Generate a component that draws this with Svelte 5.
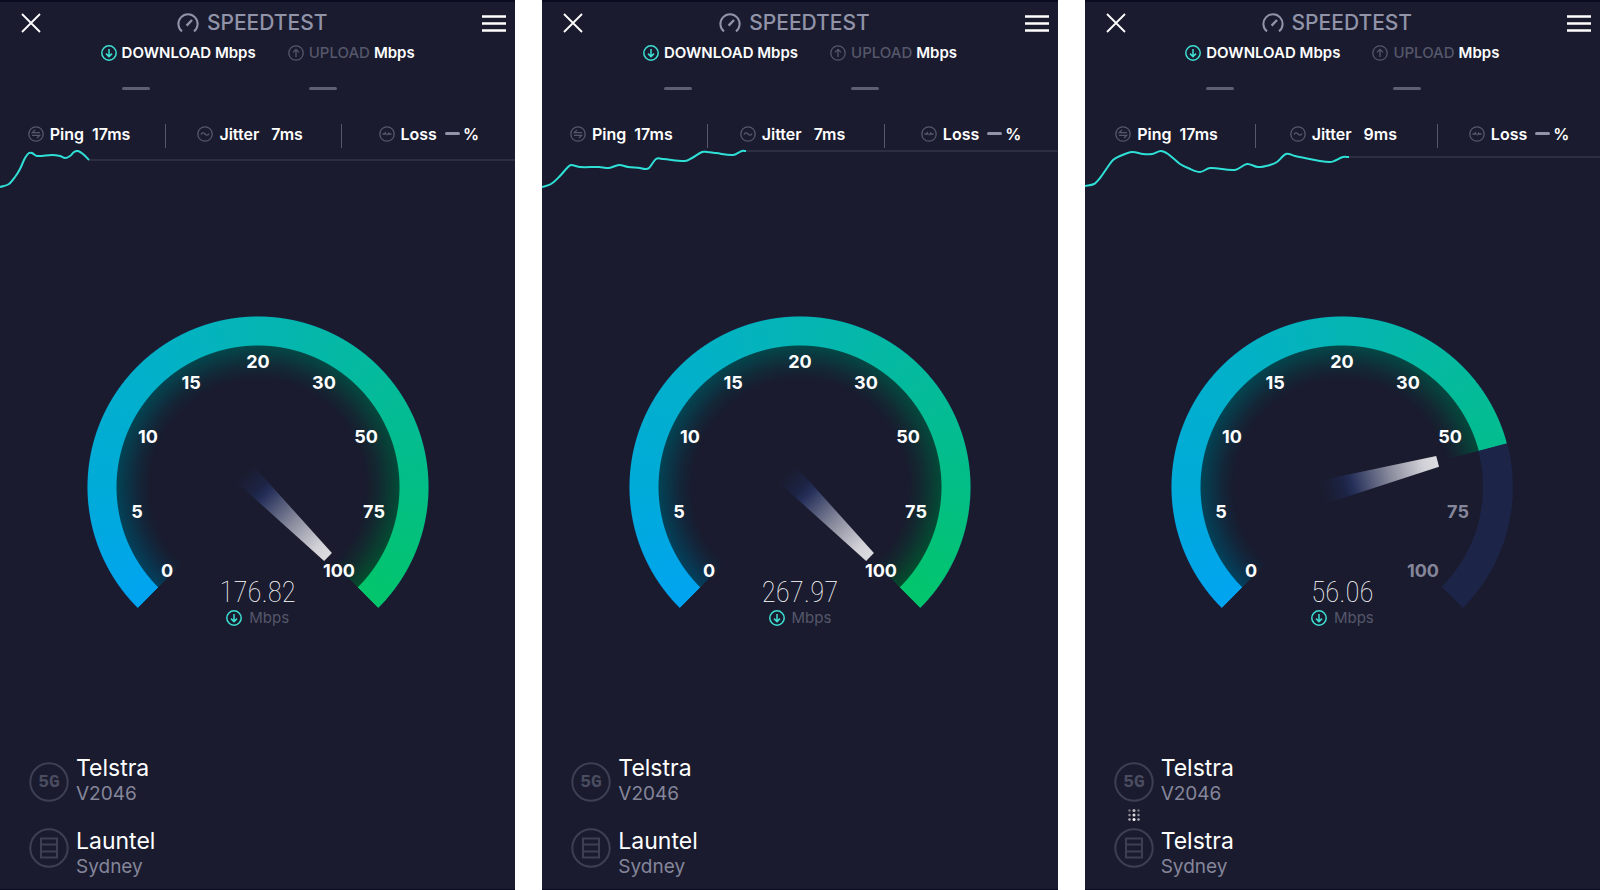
<script>
  const ticks = [
    { value: 0, x: -91, y: 83 },
    { value: 5, x: -121, y: 24 },
    { value: 10, x: -110, y: -51 },
    { value: 15, x: -67, y: -105 },
    { value: 20, x: 0, y: -126 },
    { value: 30, x: 66, y: -105 },
    { value: 50, x: 108, y: -51 },
    { value: 75, x: 116, y: 24 },
    { value: 100, x: 81, y: 83 },
  ]

  // sweep is in degrees, 0 at the bottom left and 270 at the bottom right
  const tests = [
    {
      speed: '176.82',
      sweep: 270,
      jitter: '7ms',
      server: 'Launtel',
      points: [[0,39],[9,36],[15,29],[20,21],[25,10],[29,5],[32,5],[37,8],[52,7],[60,8],[65,10],[70,8],[74,4],[78,3],[83,6],[89,12]],
    },
    {
      speed: '267.97',
      sweep: 270,
      jitter: '7ms',
      server: 'Launtel',
      points: [[0,39],[9,36],[17,29],[26,19],[29,17],[38,19],[57,19],[67,20],[77,17],[86,19],[98,20],[103,21],[107,20],[114,11],[121,11],[143,13],[150,10],[160,4],[165,4],[174,5],[191,7],[200,3],[204,3]],
    },
    {
      speed: '56.06',
      sweep: 210,
      jitter: '9ms',
      server: 'Telstra',
      wide: true,
      hopping: true,
      points: [[0,38],[9,36],[15,30],[22,20],[28,12],[35,8],[47,4],[58,6],[67,6],[76,3],[83,6],[95,16],[103,20],[115,24],[125,20],[150,22],[162,16],[173,19],[185,17],[192,14],[201,6],[210,8],[245,14],[258,9],[264,9]],
    },
  ]

  function isReached(value, sweep) {
    return sweep >= 270 || value <= 50
  }

  // cubic segments through every point
  function smooth(points) {
    let d = `M${points[0]}`
    for (let i = 0; i < points.length - 1; i++) {
      const p0 = points[i - 1] || points[i]
      const p1 = points[i]
      const p2 = points[i + 1]
      const p3 = points[i + 2] || p2
      const dx = p2[0] - p1[0]
      const s1 = (p2[1] - p0[1]) / (p2[0] - p0[0])
      const s2 = (p3[1] - p1[1]) / (p3[0] - p1[0])
      d += ` C${p1[0] + dx / 3},${p1[1] + s1 * dx / 3} ${p2[0] - dx / 3},${p2[1] - s2 * dx / 3} ${p2}`
    }
    return d
  }
</script>

{#snippet arrow(up)}
  <svg class="icon" class:up viewBox="0 0 16 16" aria-hidden="true">
    <circle cx="8" cy="8" r="7.2" />
    <path d="M8 4v7.4M5 8.6l3 3 3-3" />
  </svg>
{/snippet}

<main>
  {#each tests as test, i}
    <section class="panel">
      <header>
        <button aria-label="Close">
          <svg width="20" height="20" viewBox="0 0 20 20"><path d="M1 1l18 18M19 1L1 19" stroke="#fff" stroke-width="1.8" /></svg>
        </button>
        <h1>
          <svg width="22" height="20" viewBox="0 0 22 20" fill="none" stroke="#9193a8" stroke-width="2">
            <path d="M5 18.4A9.6 9.6 0 1 1 17 18.4" />
            <path d="M9.6 12.6L15 7" stroke-width="2.4" />
          </svg>
          SPEEDTEST
        </h1>
        <button aria-label="Menu">
          <svg width="24" height="17" viewBox="0 0 24 17"><path d="M0 1.5h24M0 8.5h24M0 15.5h24" stroke="#fff" stroke-width="2.6" /></svg>
        </button>
      </header>

      <div class="results">
        <div class="result download">
          <p>{@render arrow(false)}<span>DOWNLOAD <b>Mbps</b></span></p>
          <i class="blank"></i>
        </div>
        <div class="result upload">
          <p>{@render arrow(true)}<span>UPLOAD <b>Mbps</b></span></p>
          <i class="blank"></i>
        </div>
      </div>

      <div class="stats" class:wide={test.wide}>
        <div class="stat">
          <svg class="icon" viewBox="0 0 16 16" aria-hidden="true">
            <circle cx="8" cy="8" r="7.2" />
            <path d="M12 6.6H4.4L7 4M4 9.4h7.6L9 12" />
          </svg>
          <span>Ping</span>
          <span class="value">17ms</span>
        </div>
        <div class="stat">
          <svg class="icon" viewBox="0 0 16 16" aria-hidden="true">
            <circle cx="8" cy="8" r="7.2" />
            <path d="M4 8.6C5 6.4 6.6 6.4 8 8s3 1.6 4-.6" />
          </svg>
          <span>Jitter</span>
          <span class="value far">{test.jitter}</span>
        </div>
        <div class="stat last">
          <svg class="icon" viewBox="0 0 16 16" aria-hidden="true">
            <circle cx="8" cy="8" r="7.2" />
            <path d="M3.4 8h2l1-1.2L7.4 9M8.6 9.2l1-2.2.8 1h2.2" />
          </svg>
          <span>Loss</span>
          <span class="value loss"><i></i>%</span>
        </div>
      </div>

      <svg class="graph" aria-hidden="true">
        <line x1={test.points.at(-1)[0]} x2="100%" y1={test.points.at(-1)[1]} y2={test.points.at(-1)[1]} />
        <path d={smooth(test.points)} />
      </svg>

      <div class="gauge">
        <svg width="342" height="292" viewBox="-171 -171 342 292">
          <path class="track" d="M-110.3 110.3A156 156 0 1 1 110.3 110.3" />
        </svg>
        <div class="arc" style="--sweep: {test.sweep}deg"></div>
        <svg class="dial" width="342" height="292" viewBox="-171 -171 342 292">
          <defs>
            <linearGradient id="needle{i}" gradientUnits="userSpaceOnUse" x1="-22" x2="99" y1="0" y2="0">
              <stop offset="0" stop-color="#1c2547" stop-opacity="0" />
              <stop offset="0.2" stop-color="#1e2a55" stop-opacity="0.6" />
              <stop offset="0.28" stop-color="#27315a" />
              <stop offset="0.6" stop-color="#8b8d9f" />
              <stop offset="0.88" stop-color="#d2d1d7" />
              <stop offset="1" stop-color="#dddce0" />
            </linearGradient>
          </defs>
          <path d="M-22 -12L99 -5.5V5.5L-22 12Z" fill="url(#needle{i})" transform="rotate({test.sweep + 135})" />
          {#each ticks as tick}
            <text x={tick.x} y={tick.y} class:dim={!isReached(tick.value, test.sweep)}>{tick.value}</text>
          {/each}
        </svg>
        <div class="readout">
          <strong>{test.speed}</strong>
          <p class="unit">{@render arrow(false)}Mbps</p>
        </div>
      </div>

      <footer>
        <div class="hops">
          <svg width="40" height="40" viewBox="0 0 40 40" aria-hidden="true">
            <circle cx="20" cy="20" r="18.7" />
            <text x="20" y="20">5G</text>
          </svg>
          <div class="between">
            {#if test.hopping}
              <svg width="12" height="12" viewBox="0 0 12 12" aria-hidden="true">
                {#each [1.5, 6, 10.5] as y, row}
                  {#each [1.5, 6, 10.5] as x, col}
                    <circle class="dot" cx={x} cy={y} r={col === 1 ? 1.5 : 1.2} opacity={(col === 1 ? 0.7 : 0.4) + row * 0.14} />
                  {/each}
                {/each}
              </svg>
            {/if}
          </div>
          <svg width="40" height="40" viewBox="0 0 40 40" aria-hidden="true">
            <circle cx="20" cy="20" r="18.7" />
            <path d="M12 10.5h16v19H12zM12 16.5h16M12 23.5h16" />
          </svg>
        </div>
        <div class="names">
          <div>
            <h2>Telstra</h2>
            <p>V2046</p>
          </div>
          <div>
            <h2>{test.server}</h2>
            <p>Sydney</p>
          </div>
        </div>
      </footer>
    </section>
  {/each}
</main>

<style>
  :global(body) {
    margin: 0;
    background: #fff;
  }

  main {
    display: grid;
    grid-template-columns: repeat(3, 1fr);
    gap: 27px;
    min-height: 100vh;
    font-family: Inter, "Open Sans", sans-serif;
    color: #fff;
  }

  .panel {
    display: flex;
    flex-direction: column;
    background: #1a1b2e;
    border-top: 2px solid #0a0a20;
    border-bottom: 1px solid #0a0a20;
    overflow: hidden;
  }

  h1, h2, p {
    margin: 0;
    font-weight: 400;
  }

  header {
    display: flex;
    align-items: center;
    justify-content: space-between;
    height: 42px;
    padding: 0 9px 0 21px;
  }

  header button {
    display: flex;
    padding: 0;
    border: 0;
    background: none;
    cursor: pointer;
  }

  h1 {
    display: flex;
    align-items: center;
    gap: 8px;
    padding-right: 19px;
    font-size: 21px;
    line-height: 24px;
    font-weight: 500;
    color: #9193a8;
  }

  .icon {
    flex: none;
    width: 16px;
    height: 16px;
    fill: none;
    stroke: #55576b;
    stroke-width: 1.3;
  }

  .up path {
    transform: rotate(180deg);
    transform-origin: center;
  }

  .results {
    display: flex;
    justify-content: center;
    gap: 32px;
  }

  .result p {
    display: flex;
    align-items: center;
    gap: 5px;
    font-size: 15px;
    line-height: 18px;
    font-weight: 600;
  }

  .result b {
    font-weight: 600;
    color: #fff;
  }

  .download .icon, .unit .icon {
    stroke: #3de0d3;
    stroke-width: 1.5;
  }

  .upload p {
    font-weight: 500;
    color: #55576b;
  }

  .blank {
    display: block;
    width: 28px;
    height: 3px;
    margin: 25px 0 34px 21px;
    border-radius: 2px;
    background: #5d5f73;
  }

  .stats {
    display: grid;
    grid-template-columns: 165fr 176fr 174fr;
  }

  .stats.wide {
    grid-template-columns: 171fr 182fr 163fr;
  }

  .stat {
    display: flex;
    justify-content: center;
    height: 24px;
    padding-right: 7px;
    font-size: 16px;
    line-height: 20px;
    font-weight: 600;
  }

  .stat.last {
    padding-right: 0;
  }

  .stat + .stat {
    border-left: 1px solid #55576b;
  }

  .stat .icon {
    margin: 2px 6px 0 0;
  }

  .value {
    margin-left: 8px;
  }

  .value.far {
    margin-left: 12px;
  }

  .loss {
    display: flex;
  }

  .loss i {
    width: 15px;
    height: 3px;
    margin: 8px 3px 0 0;
    border-radius: 2px;
    background: #9193a8;
  }

  .graph {
    width: 100%;
    height: 41px;
    fill: none;
  }

  .graph path {
    stroke: #2fe0d6;
    stroke-width: 2;
  }

  .graph line {
    stroke: #414357;
    stroke-width: 1;
  }

  .gauge {
    display: grid;
    grid-template-rows: 311px;
    margin: auto;
  }

  .gauge > * {
    grid-area: 1 / 1;
  }

  .track {
    fill: none;
    stroke: #1c2547;
    stroke-width: 30;
  }

  .arc {
    display: grid;
    width: 342px;
    height: 342px;
    mask: conic-gradient(from 225deg, #000 var(--sweep), transparent calc(var(--sweep) + 0.3deg), transparent 359.7deg, #000);
  }

  .arc::before, .arc::after {
    content: "";
    grid-area: 1 / 1;
    background: conic-gradient(from 225deg, #00a4f0, #00abd8 45deg, #02b0ca 90deg, #04b5b4 135deg, #04ba9d 180deg, #03be86 225deg, #02c56b 270deg, #02c56b 315deg, #00a4f0 315deg);
  }

  /* darker glow that fades towards the centre */
  .arc::before {
    filter: brightness(0.42);
    mask: radial-gradient(circle, transparent 107px, rgba(0, 0, 0, 0.25) 120px, rgba(0, 0, 0, 0.85) 140px, #000 142px, transparent 143px);
  }

  .arc::after {
    mask: radial-gradient(circle, transparent 141px, #000 142px, #000 170px, transparent 171px);
  }

  /* masked arc would otherwise paint over the numbers */
  .dial, .readout {
    z-index: 1;
  }

  .gauge text {
    fill: #fff;
    font-size: 18px;
    font-weight: 700;
    text-anchor: middle;
    dominant-baseline: central;
  }

  .gauge text.dim {
    fill: #85869a;
  }

  .readout {
    align-self: end;
    text-align: center;
  }

  .readout strong {
    display: block;
    font-family: "Roboto Condensed", Roboto, "Liberation Sans Narrow", sans-serif;
    font-size: 29px;
    line-height: 34px;
    font-weight: 100;
  }

  .unit {
    display: flex;
    align-items: center;
    justify-content: center;
    gap: 7px;
    font-size: 15px;
    line-height: 18px;
    color: #55576b;
  }

  footer {
    display: flex;
    gap: 7px;
    padding: 0 29px 10px;
  }

  .hops {
    display: flex;
    flex-direction: column;
    padding-top: 8px;
  }

  .hops circle, .hops path {
    fill: none;
    stroke: #3d3f53;
    stroke-width: 2;
  }

  .hops .dot {
    fill: #fff;
    stroke: none;
  }

  .hops text {
    fill: #4a4c60;
    font-family: "Liberation Mono", monospace;
    font-size: 18px;
    font-weight: 700;
    text-anchor: middle;
    dominant-baseline: central;
  }

  .between {
    display: flex;
    align-items: center;
    justify-content: center;
    height: 26px;
  }

  .names {
    display: flex;
    flex-direction: column;
    gap: 21px;
  }

  h2 {
    font-size: 23px;
    line-height: 28px;
  }

  .names p {
    font-size: 19px;
    line-height: 24px;
    color: #85869a;
  }
</style>
